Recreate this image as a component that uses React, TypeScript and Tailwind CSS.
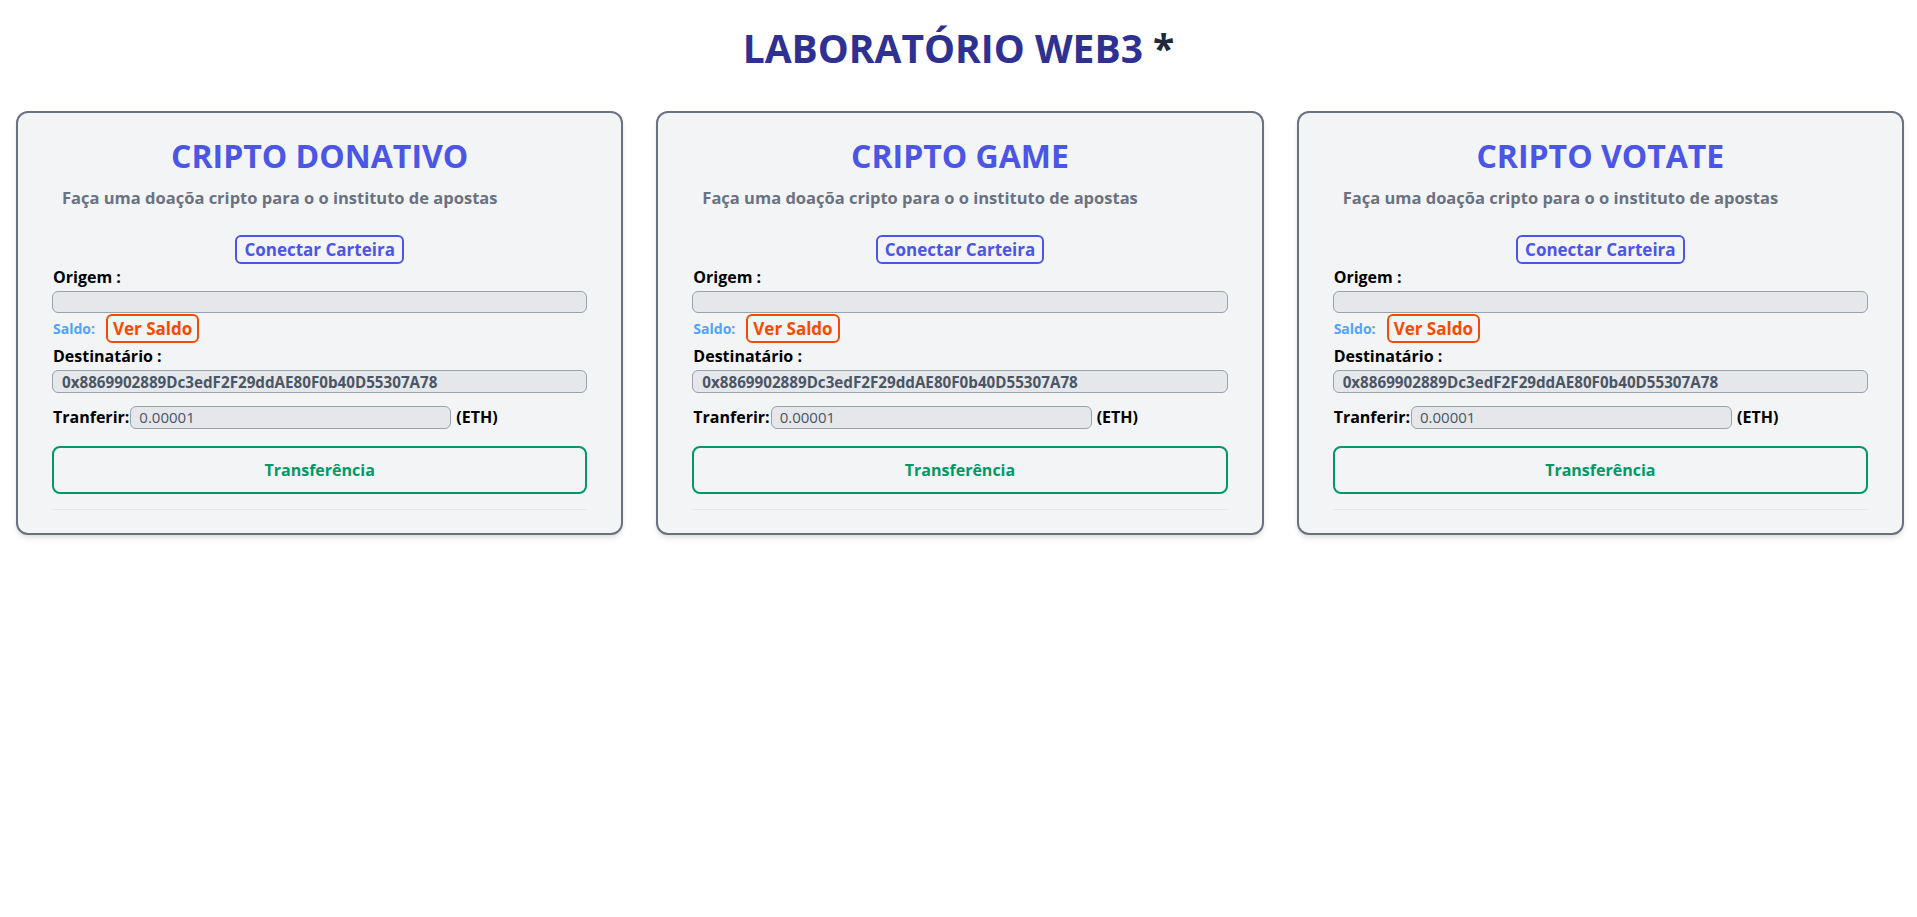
const FONT = "font-['Open_Sans','Noto_Sans',sans-serif]";

const CARDS = ["CRIPTO DONATIVO", "CRIPTO GAME", "CRIPTO VOTATE"];

function Card({ title }: { title: string }) {
  return (
    <div className="flex flex-col rounded-xl border-2 border-gray-500 bg-gray-100 px-[34px] pt-[23px] pb-[23px] shadow-md">
      <h2 className="text-center text-[32px] leading-[40px] font-bold text-[#4b55e6]">{title}</h2>
      <p className="mt-[10px] pl-[10px] text-[16.5px] leading-[24px] font-bold text-gray-500">
        Faça uma doaçõa cripto para o o instituto de apostas
      </p>
      <div className="mt-[25px] flex justify-center">
        <button className="h-[29px] rounded-md border-2 border-[#4b55e6] px-[7px] text-[17px] leading-none font-bold text-[#4b55e6]">
          Conectar Carteira
        </button>
      </div>
      <label className="pl-px text-[16px] leading-[26px] font-bold text-black">Origem :</label>
      <input
        readOnly
        className="mt-px h-[22px] w-full rounded-md border border-gray-400 bg-gray-200 px-2 outline-none"
      />
      <div className="mt-px flex h-[29px] items-center gap-[11px]">
        <span className="pl-px text-[14px] font-bold text-blue-400">Saldo:</span>
        <button className="h-[29px] rounded-md border-2 border-orange-600 px-[5px] text-[17px] leading-none font-bold text-orange-600">
          Ver Saldo
        </button>
      </div>
      <label className="pl-px text-[16px] leading-[27px] font-bold text-black">Destinatário :</label>
      <input
        readOnly
        value="0x8869902889Dc3edF2F29ddAE80F0b40D55307A78"
        className="h-[23px] w-full rounded-md border border-gray-400 bg-gray-200 px-[9px] text-[15.2px] font-bold text-gray-600 outline-none"
      />
      <div className="mt-[12px] flex items-center">
        <span className="pl-px text-[16px] font-bold text-black">Tranferir:</span>
        <input
          readOnly
          value="0.00001"
          className="ml-px h-[23px] w-[321px] rounded-md border border-gray-400 bg-gray-200 px-2 text-[15px] font-medium text-gray-600 outline-none"
        />
        <span className="ml-[5px] text-[16px] font-bold text-black">(ETH)</span>
      </div>
      <button className="mt-[17px] h-[48px] w-full rounded-lg border-2 border-emerald-600 text-[16px] font-bold text-emerald-600">
        Transferência
      </button>
      <hr className="mt-[15px] border-gray-200" />
    </div>
  );
}

export default function App() {
  return (
    <div className={`min-h-screen bg-white ${FONT}`}>
      <h1 className="pt-[24px] text-center text-[39px] leading-[48px] font-bold text-[#2e3192]">
        LABORATÓRIO WEB3 <span className="text-gray-800">*</span>
      </h1>
      <div className="mt-[39px] grid grid-cols-3 items-start gap-[33px] pr-[13px] pl-4">
        {CARDS.map((c) => (
          <Card key={c} title={c} />
        ))}
      </div>
    </div>
  );
}
